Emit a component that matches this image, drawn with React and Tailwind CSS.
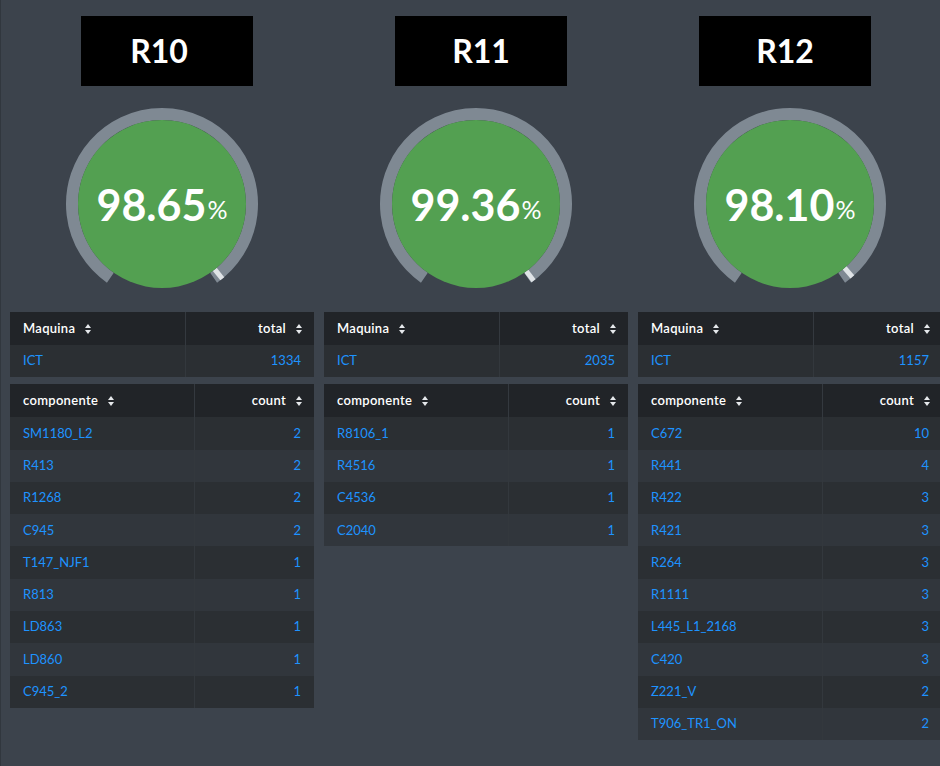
import React from 'react';

const panels = [
  {
    name: 'R10', boxOffset: 'ml-[71px] pr-[16px]', pct: 98.65, total: 1334,
    rows: [['SM1180_L2', 2], ['R413', 2], ['R1268', 2], ['C945', 2], ['T147_NJF1', 1], ['R813', 1], ['LD863', 1], ['LD860', 1], ['C945_2', 1]],
  },
  {
    name: 'R11', boxOffset: 'ml-[71px]', pct: 99.36, total: 2035,
    rows: [['R8106_1', 1], ['R4516', 1], ['C4536', 1], ['C2040', 1]],
  },
  {
    name: 'R12', boxOffset: 'ml-[61px]', pct: 98.1, total: 1157,
    rows: [['C672', 10], ['R441', 4], ['R422', 3], ['R421', 3], ['R264', 3], ['R1111', 3], ['L445_L1_2168', 3], ['C420', 3], ['Z221_V', 2], ['T906_TR1_ON', 2]],
  },
];

const polar = (r, deg) => {
  const a = (deg * Math.PI) / 180;
  return [100 + r * Math.cos(a), 100 + r * Math.sin(a)];
};

const SortIcon = () => (
  <svg width="6" height="10" viewBox="0 0 6 10" className="shrink-0">
    <path d="M0 4 L3 0 L6 4 Z" fill="#e6e9ec" />
    <path d="M0 6 L3 10 L6 6 Z" fill="#e6e9ec" />
  </svg>
);

const Gauge = ({ pct }) => {
  const start = 125;
  const sweep = 290;
  const [sx, sy] = polar(90, start);
  const [ex, ey] = polar(90, start + sweep);
  const markAngle = start + (sweep * pct) / 100;
  const [m1x, m1y] = polar(84, markAngle);
  const [m2x, m2y] = polar(96, markAngle);
  const [whole, frac] = pct.toFixed(2).split('.');

  return (
    <div className="relative w-[200px] h-[200px] mx-auto">
      <svg width="200" height="200" viewBox="0 0 200 200" className="absolute inset-0">
        <path
          d={`M ${sx} ${sy} A 90 90 0 1 1 ${ex} ${ey}`}
          fill="none"
          stroke="#7f8993"
          strokeWidth="12"
        />
        <line x1={m1x} y1={m1y} x2={m2x} y2={m2y} stroke="#dfe3e6" strokeWidth="5" />
        <circle cx="100" cy="100" r="84" fill="#53a051" />
      </svg>
      <div className="absolute inset-0 flex items-center justify-center text-white">
        <span className="text-[43px] font-bold leading-none">{whole}.{frac}</span>
        <span className="text-[25px] leading-none mt-[11px] ml-[1px]">%</span>
      </div>
    </div>
  );
};

const DataTable = ({ head, firstCol, rows }) => (
  <div className={`grid ${firstCol} text-[13px]`}>
    <div className="bg-[#212428] h-[33px] flex items-center pl-[13px] gap-[10px] text-white font-semibold tracking-[0.3px]">
      {head[0]} <SortIcon />
    </div>
    <div className="bg-[#212428] h-[33px] flex items-center justify-end pr-[12px] gap-[10px] text-white font-semibold tracking-[0.3px] border-l border-[#34393f]">
      {head[1]} <SortIcon />
    </div>
    {rows.map(([label, value], i) => {
      const bg = i % 2 === 0 ? 'bg-[#2b2f33]' : 'bg-[#31363c]';
      return (
        <React.Fragment key={label}>
          <div className={`${bg} h-[32.3px] flex items-center pl-[13px] text-[#1e93ff]`}>{label}</div>
          <div className={`${bg} h-[32.3px] flex items-center justify-end pr-[13px] text-[#1e93ff] border-l border-[#33383d]`}>{value}</div>
        </React.Fragment>
      );
    })}
  </div>
);

const Panel = ({ panel }) => (
  <div className="w-[304px] shrink-0 flex flex-col">
    <div className={`${panel.boxOffset} mt-[16px] w-[172px] h-[70px] bg-black flex items-center justify-center text-white text-[32px] font-bold`}>
      {panel.name}
    </div>
    <div className="mt-[18px]">
      <Gauge pct={panel.pct} />
    </div>
    <div className="mt-[8px]">
      <DataTable head={['Maquina', 'total']} firstCol="grid-cols-[175px_1fr]" rows={[['ICT', panel.total]]} />
    </div>
    <div className="mt-[7px]">
      <DataTable head={['componente', 'count']} firstCol="grid-cols-[184px_1fr]" rows={panel.rows} />
    </div>
  </div>
);

export default function App() {
  return (
    <div className="w-[940px] h-[766px] overflow-hidden bg-[#3c434c] font-['Lato',sans-serif] border-l border-[#31373e]">
      <div className="flex gap-[10px] pl-[9px]">
        {panels.map((p) => (
          <Panel key={p.name} panel={p} />
        ))}
      </div>
    </div>
  );
}
